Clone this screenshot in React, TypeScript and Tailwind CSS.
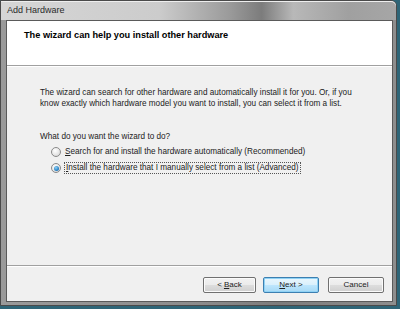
import { FC } from 'react';

// Vista-style "Add Hardware" wizard page

const Radio: FC<{ checked?: boolean }> = ({ checked }) => (
  <span className="relative flex h-[10px] w-[10px] shrink-0 items-center justify-center rounded-full border border-[#8a8a8a] bg-[radial-gradient(circle_at_40%_35%,#ffffff_0%,#e4e4e4_60%,#cfcfcf_100%)]">
    {checked && (
      <span className="h-[5px] w-[5px] rounded-full bg-[radial-gradient(circle_at_40%_35%,#8fd0f5_0%,#2a84c6_60%,#155c99_100%)]" />
    )}
  </span>
);

const WizardButton: FC<{ children: React.ReactNode; width: string; primary?: boolean }> = ({
  children,
  width,
  primary,
}) => (
  <button
    type="button"
    className={`flex h-[16px] items-center justify-center rounded-[2px] border text-[8px] leading-none text-[#222] ${width} ${
      primary
        ? 'border-[#3c7fb1] bg-[linear-gradient(180deg,#eaf6fd_0%,#d9f0fc_50%,#bee6fd_51%,#a7d9f5_100%)] shadow-[inset_0_0_0_1px_#8fd2f5]'
        : 'border-[#707070] bg-[linear-gradient(180deg,#f2f2f2_0%,#ebebeb_50%,#dddddd_51%,#cfcfcf_100%)] shadow-[inset_0_0_0_1px_#fbfbfb]'
    }`}
  >
    {children}
  </button>
);

export default function App() {
  return (
    <div
      className="h-[309px] w-[400px] overflow-hidden bg-[#2e6577]"
      style={{ fontFamily: '"Liberation Sans", Arial, sans-serif' }}
    >
      <div className="flex h-[306px] w-[397px] flex-col rounded-tr-[6px] border border-[#4a4a4a] bg-[linear-gradient(90deg,#9a9a9a_0%,#8c8c8c_50%,#7c7c7c_70%,#8e8e8e_100%)]">
        {/* title bar */}
        <div className="flex h-[19px] shrink-0 items-center rounded-tr-[5px] bg-[linear-gradient(90deg,#d6d6d6_0%,#cccccc_40%,#9a9a9a_58%,#7c7c7c_66%,#b8b8b8_74%,#a0a0a0_88%,#a6a6a6_100%)] pl-[6px] shadow-[inset_0_1px_0_#eeeeee]">
          <span className="text-[9px] text-[#2a2a2a]">Add Hardware</span>
        </div>

        {/* client area */}
        <div className="mb-[3px] ml-[5px] mr-[3px] flex flex-1 flex-col border border-[#5a5a5a] bg-[#f0f0f0]">
          {/* header */}
          <div className="h-[45px] shrink-0 border-b border-[#a0a0a0] bg-white pl-[17px] pt-[8px]">
            <p className="text-[9.2px] font-bold leading-[12px] text-black">
              The wizard can help you install other hardware
            </p>
          </div>
          <div className="h-px bg-white" />

          {/* body */}
          <div className="flex flex-1 flex-col pl-[33px] pt-[20px] text-[8.2px] leading-[11px] text-[#222]">
            <p>The wizard can search for other hardware and automatically install it for you. Or, if you</p>
            <p>know exactly which hardware model you want to install, you can select it from a list.</p>

            <p className="mt-[22px]">What do you want the wizard to do?</p>

            <div className="mt-[4px] flex flex-col gap-[5px] pl-[11px]">
              <div className="flex items-center gap-[3px]">
                <Radio />
                <span className="px-px">
                  <span className="underline">S</span>earch for and install the hardware automatically (Recommended)
                </span>
              </div>
              <div className="flex items-center gap-[3px]">
                <Radio checked />
                <span className="border border-dotted border-[#555] px-px leading-[10px]">
                  <span className="underline">I</span>nstall the hardware that I manually select from a list (Advanced)
                </span>
              </div>
            </div>
          </div>

          {/* footer */}
          <div className="h-px bg-[#a0a0a0]" />
          <div className="h-px bg-white" />
          <div className="flex h-[34px] shrink-0 items-start justify-end pr-[8px] pt-[10px]">
            <WizardButton width="w-[53px]">
              &lt; <span className="ml-[2px] underline">B</span>ack
            </WizardButton>
            <div className="w-[7px]" />
            <WizardButton width="w-[56px]" primary>
              <span className="underline">N</span>ext &gt;
            </WizardButton>
            <div className="w-[9px]" />
            <WizardButton width="w-[56px]">Cancel</WizardButton>
          </div>
        </div>
      </div>
    </div>
  );
}
